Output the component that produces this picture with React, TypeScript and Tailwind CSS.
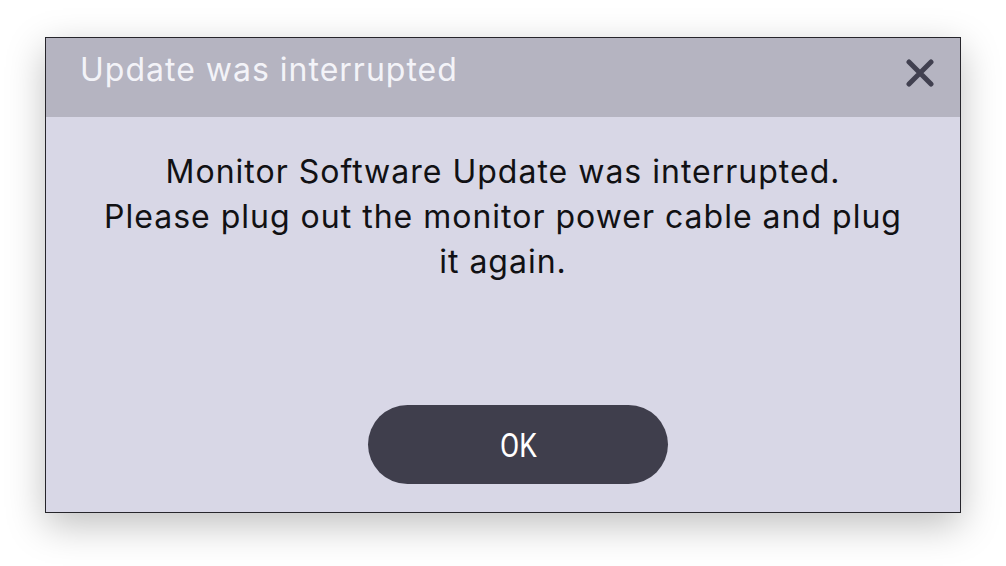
import React from "react";

export default function App() {
  return (
    <div className="w-[1006px] h-[566px] bg-white overflow-hidden pt-[37px] pl-[45px]" style={{ fontFamily: "Inter, 'Liberation Sans', sans-serif" }}>
      <div className="w-[916px] h-[476px] border border-[#26252b] bg-[#d8d7e6] flex flex-col shadow-[0_12px_36px_rgba(0,0,0,0.25)]">
        <div className="h-[79px] bg-[#b5b4c1] flex items-start justify-between pl-[34px] pr-[26px]">
          <div className="pt-[12px] text-[32px] leading-[40px] tracking-[1px] text-[#f3f3f8]">Update was interrupted</div>
          <svg className="mt-[21px]" width="28" height="28" viewBox="0 0 28 28">
            <path d="M3 3 L25 25 M25 3 L3 25" stroke="#414050" strokeWidth="5" strokeLinecap="round" />
          </svg>
        </div>
        <div className="flex-1 flex flex-col items-center pt-[32px] pb-[28px]">
          <div className="w-[812px] text-center text-[32px] leading-[45px] tracking-[1px] text-[#111114]">
            Monitor Software Update was interrupted.
            <br />
            Please plug out the monitor power cable and plug it again.
          </div>
          <div className="flex-1" />
          <button className="self-start ml-[322px] w-[300px] h-[79px] rounded-full bg-[#3f3e4c] flex items-center justify-center">
            <span className="inline-block scale-x-[0.82] text-white text-[34px] leading-none" style={{ fontFamily: "Roboto, sans-serif" }}>OK</span>
          </button>
        </div>
      </div>
    </div>
  );
}
